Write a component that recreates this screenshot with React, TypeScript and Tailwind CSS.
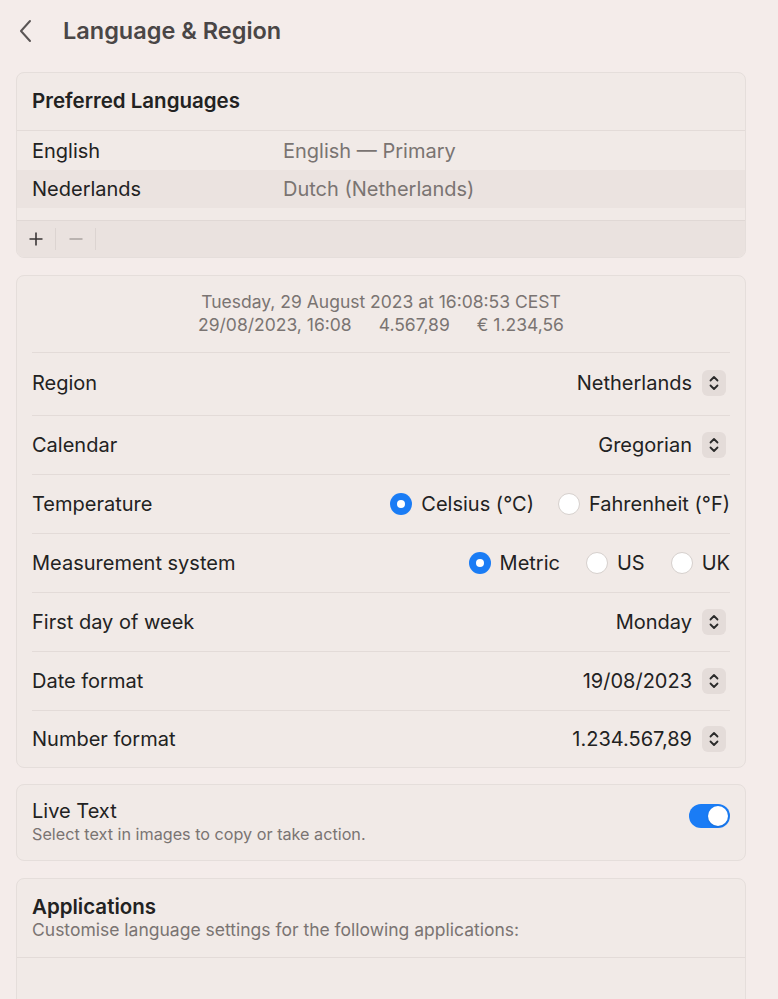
import React from 'react';

const font = { fontFamily: 'Inter, "Noto Sans", sans-serif' };

const Stepper = () => (
  <div className="w-6 h-[26px] rounded-md bg-[#e4dcd9] flex items-center justify-center">
    <svg width="12" height="18" viewBox="0 0 12 18" fill="none" stroke="#2a2a2a" strokeWidth="1.8" strokeLinecap="round" strokeLinejoin="round">
      <path d="M2.5 6.5 6 3l3.5 3.5" />
      <path d="M2.5 11.5 6 15l3.5-3.5" />
    </svg>
  </div>
);

const Radio = ({ checked, label }: { checked?: boolean; label: string }) => (
  <div className="flex items-center gap-[9px]">
    {checked ? (
      <div className="w-[22px] h-[22px] rounded-full bg-[#1a7cf5] flex items-center justify-center">
        <div className="w-2 h-2 rounded-full bg-white" />
      </div>
    ) : (
      <div className="w-[22px] h-[22px] rounded-full bg-white border border-[#d6d0cd]" />
    )}
    <span>{label}</span>
  </div>
);

const PopupRow = ({ label, value, first }: { label: string; value: string; first?: boolean }) => (
  <div className={`flex items-center justify-between border-t border-[#e3dbd8] ${first ? 'h-[63px] pb-[3px]' : 'h-[59px]'}`}>
    <span>{label}</span>
    <div className="flex items-center gap-[10px] pr-1">
      <span>{value}</span>
      <Stepper />
    </div>
  </div>
);

export default function App() {
  return (
    <div className="min-h-screen bg-[#f4ecea] text-[#222] pl-4 pr-8 overflow-hidden" style={font}>
      {/* header */}
      <div className="h-[72px] flex items-start pt-[16px]">
        <svg width="20" height="26" viewBox="0 0 20 26" className="ml-[1px] mt-[2px]" fill="none" stroke="#5a5555" strokeWidth="2" strokeLinecap="round" strokeLinejoin="round">
          <path d="M13 3 4 13l9 10" />
        </svg>
        <h1 className="ml-[26px] text-[23.5px] font-semibold text-[#4a4646] leading-[30px]">Language &amp; Region</h1>
      </div>

      {/* preferred languages */}
      <div className="rounded-lg border border-[#e5dedb] bg-[#f1eae7] overflow-hidden">
        <div className="h-[58px] flex items-center px-[15px] border-b border-[#e3dbd8]">
          <span className="text-[20.5px] font-semibold">Preferred Languages</span>
        </div>
        <div className="h-[39px] flex items-center px-[15px] text-[20px]">
          <span className="w-[251px]">English</span>
          <span className="text-[#7a7472]">English — Primary</span>
        </div>
        <div className="h-[38px] flex items-center px-[15px] text-[20px] bg-[#ebe3e0]">
          <span className="w-[251px]">Nederlands</span>
          <span className="text-[#7a7472]">Dutch (Netherlands)</span>
        </div>
        <div className="h-3" />
        <div className="h-[37px] flex items-center bg-[#eae2df] border-t border-[#e0d8d5]">
          <div className="w-[39px] h-[22px] flex items-center justify-center border-r border-[#dcd4d1]">
            <svg width="16" height="16" viewBox="0 0 16 16" stroke="#3a3636" strokeWidth="1.6"><path d="M8 1.5v13M1.5 8h13" /></svg>
          </div>
          <div className="w-[40px] h-[22px] flex items-center justify-center border-r border-[#dcd4d1]">
            <svg width="16" height="16" viewBox="0 0 16 16" stroke="#aaa3a0" strokeWidth="1.6"><path d="M1.5 8h13" /></svg>
          </div>
        </div>
      </div>

      {/* region settings */}
      <div className="mt-[17px] rounded-lg border border-[#e5dedb] bg-[#f1eae7] px-[15px] text-[20px]">
        <div className="h-[76px] flex flex-col items-center justify-center text-[17.5px] text-[#7a7472] leading-[23px] pb-[3px]">
          <span>Tuesday, 29 August 2023 at 16:08:53 CEST</span>
          <div className="flex gap-[27px]">
            <span>29/08/2023, 16:08</span>
            <span>4.567,89</span>
            <span>€ 1.234,56</span>
          </div>
        </div>
        <PopupRow first label="Region" value="Netherlands" />
        <PopupRow label="Calendar" value="Gregorian" />
        <div className="h-[59px] flex items-center justify-between border-t border-[#e3dbd8]">
          <span>Temperature</span>
          <div className="flex items-center gap-[24px]">
            <Radio checked label="Celsius (°C)" />
            <Radio label="Fahrenheit (°F)" />
          </div>
        </div>
        <div className="h-[59px] flex items-center justify-between border-t border-[#e3dbd8]">
          <span>Measurement system</span>
          <div className="flex items-center gap-[26px]">
            <Radio checked label="Metric" />
            <Radio label="US" />
            <Radio label="UK" />
          </div>
        </div>
        <PopupRow label="First day of week" value="Monday" />
        <PopupRow label="Date format" value="19/08/2023" />
        <div className="flex items-center justify-between border-t border-[#e3dbd8] h-[57px]">
          <span>Number format</span>
          <div className="flex items-center gap-[10px] pr-1">
            <span>1.234.567,89</span>
            <Stepper />
          </div>
        </div>
      </div>

      {/* live text */}
      <div className="mt-[16px] rounded-lg border border-[#e5dedb] bg-[#f1eae7] px-[15px] h-[77px] flex items-center justify-between">
        <div className="flex flex-col pb-[2px]">
          <span className="text-[20px] leading-[25px]">Live Text</span>
          <span className="text-[16.2px] text-[#7a7472] leading-[20px]">Select text in images to copy or take action.</span>
        </div>
        <div className="w-[41px] h-[24px] rounded-full bg-[#1a7cf5] flex items-center justify-end px-[2px] mb-[14px]">
          <div className="w-5 h-5 rounded-full bg-white shadow-sm" />
        </div>
      </div>

      {/* applications */}
      <div className="mt-[17px] rounded-t-lg border border-[#e5dedb] bg-[#f1eae7] h-[200px]">
        <div className="h-[79px] flex flex-col justify-center px-[15px] pb-[2px] border-b border-[#e3dbd8]">
          <span className="text-[20.5px] font-semibold leading-[25px]">Applications</span>
          <span className="text-[17.5px] text-[#7a7472] leading-[22px]">Customise language settings for the following applications:</span>
        </div>
      </div>
    </div>
  );
}
